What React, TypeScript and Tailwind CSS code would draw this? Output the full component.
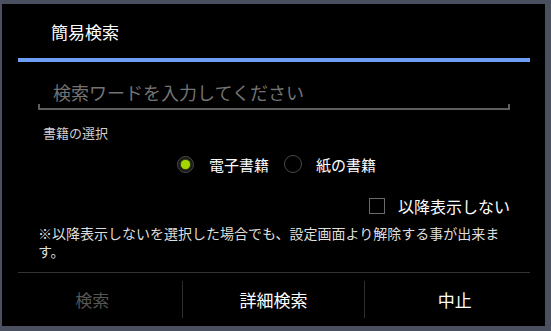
import React from "react";

export default function App() {
  return (
    <div
      className="w-[551px] h-[331px] bg-[#4b5061] pt-[4px] pl-[2px] overflow-hidden"
      style={{ fontFamily: '"Noto Sans CJK JP", "Noto Sans", sans-serif' }}
    >
      <div className="w-[543px] h-[322px] bg-black flex flex-col">
        {/* title */}
        <div className="h-[54px] flex items-center pl-[49px]">
          <span className="text-[17px] leading-none text-white">簡易検索</span>
        </div>
        <div className="h-[4px] ml-[16px] mr-[15px] bg-[#6d9df4]" />

        {/* input */}
        <div className="ml-[36px] mr-[35px] mt-[18px]">
          <div className="h-[24px] flex items-center pl-[15px]">
            <span className="text-[18px] leading-none text-[#737373]">検索ワードを入力してください</span>
          </div>
          <div className="h-[6px] border-x-2 border-b-2 border-[#5e5e5e]" />
        </div>

        {/* label */}
        <div className="h-[20px] mt-[12px] ml-[41px] flex items-center">
          <span className="text-[13px] leading-none text-[#cfcfcf]">書籍の選択</span>
        </div>

        {/* radios */}
        <div className="h-[24px] mt-[10px] ml-[175px] flex items-center">
          <div className="w-[17px] h-[17px] rounded-full border border-[#4a4a4a] bg-[#161616] flex items-center justify-center">
            <div className="w-[9px] h-[9px] rounded-full bg-[#a6d600] shadow-[0_0_2px_#a6d600]" />
          </div>
          <span className="ml-[15px] text-[15px] leading-none text-white">電子書籍</span>
          <div className="ml-[15px] w-[18px] h-[18px] rounded-full border border-[#4a4a4a]" />
          <span className="ml-[14px] text-[15px] leading-none text-white">紙の書籍</span>
        </div>

        {/* checkbox */}
        <div className="h-[20px] mt-[20px] mr-[35px] flex items-center justify-end">
          <div className="w-[16px] h-[16px] border-[1.5px] border-[#6a6a6a]" />
          <span className="ml-[13px] text-[16px] leading-none text-white">以降表示しない</span>
        </div>

        {/* note */}
        <div className="mt-[8px] ml-[36px] mr-[35px] text-[14px] leading-[18px] text-[#dedede]">
          ※以降表示しないを選択した場合でも、設定画面より解除する事が出来ます。
        </div>

        {/* divider */}
        <div className="mt-[12px] ml-[16px] mr-[15px] h-px bg-[#333333]" />

        {/* buttons */}
        <div className="flex-1 flex">
          <div className="flex-1 flex items-center justify-center">
            <span className="text-[17px] leading-none text-[#555555]">検索</span>
          </div>
          <div className="w-px my-[8px] bg-[#2e2e2e]" />
          <div className="flex-1 flex items-center justify-center">
            <span className="text-[17px] leading-none text-white">詳細検索</span>
          </div>
          <div className="w-px my-[8px] bg-[#2e2e2e]" />
          <div className="flex-1 flex items-center justify-center">
            <span className="text-[17px] leading-none text-white">中止</span>
          </div>
        </div>
      </div>
    </div>
  );
}
